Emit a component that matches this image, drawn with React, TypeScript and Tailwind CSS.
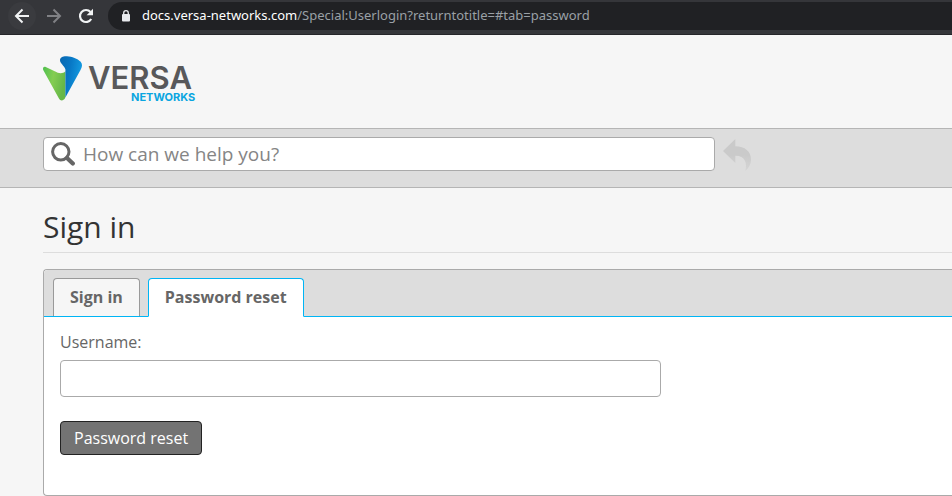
import { useState } from 'react'

function BrowserBar() {
  return (
    <div className="flex h-[35px] items-start border-b border-[#252529] bg-[#35363a] pt-[2px] font-['Noto_Sans',sans-serif]">
      <div className="flex h-7 w-[108px] shrink-0 items-center pl-2">
        <button type="button" aria-label="Back" className="flex size-7 items-center justify-center rounded-full bg-[#3a3b3f]">
          <svg width="16" height="16" viewBox="0 0 16 16" fill="none" stroke="#f1f3f4" strokeWidth="2">
            <path d="M15 8H2.5M8.5 1.5 2 8l6.5 6.5" />
          </svg>
        </button>
        <button type="button" aria-label="Forward" className="ml-1 flex size-7 items-center justify-center">
          <svg width="16" height="16" viewBox="0 0 16 16" fill="none" stroke="#808185" strokeWidth="2">
            <path d="M1 8h12.500M7.500 1.500 14 8l-6.500 6.500" />
          </svg>
        </button>
        <button type="button" aria-label="Reload" className="ml-1 flex size-7 items-center justify-center">
          <svg width="16" height="16" viewBox="0 0 16 16" fill="none">
            <path d="M13.200 11A6 6 0 1 1 12.500 4" stroke="#f1f3f4" strokeWidth="2.200" />
            <path d="M15 .8v6.400H8.600Z" fill="#f1f3f4" />
          </svg>
        </button>
      </div>
      <div className="flex h-7 min-w-0 flex-1 items-center rounded-l-full bg-[#202124] pl-[13px]">
        <svg width="10" height="12" viewBox="0 0 10 12" className="shrink-0">
          <path d="M2.700 5V3a2.300 2.300 0 0 1 4.600 0v2" fill="none" stroke="#e8eaed" strokeWidth="1.300" />
          <rect x="1" y="4" width="8" height="7.500" rx="1" fill="#e8eaed" />
        </svg>
        <span className="ml-[11px] truncate text-[13px] text-[#9aa0a6]">
          <span className="text-white">docs.versa-networks.com</span>/Special:Userlogin?returntotitle=#tab=password
        </span>
      </div>
    </div>
  )
}

function Logo() {
  return (
    <a href="/" aria-label="Versa Networks" className="inline-block">
      <svg width="156" height="50" viewBox="0 0 156 50">
        <defs>
          <linearGradient id="green" x1="0" y1="0" x2="1" y2="0.300">
            <stop offset="0" stopColor="#4fc04f" />
            <stop offset="0.500" stopColor="#84cd52" />
            <stop offset="1" stopColor="#66b748" />
          </linearGradient>
          <linearGradient id="blue" x1="0" y1="0" x2="1" y2="0.300">
            <stop offset="0" stopColor="#0a68b0" />
            <stop offset="0.500" stopColor="#0878c6" />
            <stop offset="1" stopColor="#149be0" />
          </linearGradient>
        </defs>
        <path
          d="M2.200 11.800C.2 11.400-.6 13.500.5 15.600L15.800 43.200C17.500 46.200 20.200 46 22 43.200L22.400 42V16.200C19.600 19 15.800 18.700 11.700 16.200Z"
          fill="url(#green)"
        />
        <path
          d="M22.400 16.200C23.700 12.300 17 9 17 5.200C17 1.900 20.200 1 24 1.200C29 1.500 34.500 3.500 37.700 6.800C39.800 9.300 39.200 12 37.500 15L22.400 42.600Z"
          fill="url(#blue)"
        />
        <text fontFamily="Inter, sans-serif">
          <tspan x="45" y="34" fontSize="31" fontWeight="600" fill="#58585a">
            VERSA
          </tspan>
          <tspan x="88" y="46" fontSize="11" fontWeight="700" fill="#09a5e0">
            NETWORKS
          </tspan>
        </text>
      </svg>
    </a>
  )
}

function SearchBar() {
  return (
    <div className="flex items-start border-y border-[#b5b5b5] bg-[#ddd] pt-2 pr-4 pb-4 pl-[43px]">
      <label className="flex h-[34px] w-full max-w-[672px] items-center rounded border border-[#aaa] bg-white px-[7px]">
        <svg width="24" height="24" viewBox="0 0 24 24" fill="none" stroke="#666" className="shrink-0">
          <circle cx="9.800" cy="9.800" r="8.200" strokeWidth="3" />
          <path d="m16 16 5.800 5.600" strokeWidth="4.200" strokeLinecap="round" />
        </svg>
        <input
          type="search"
          aria-label="Search"
          placeholder="How can we help you?"
          className="ml-2 w-full min-w-0 bg-transparent text-[19px] outline-none placeholder:text-[#858585]"
        />
      </label>
      <button type="button" aria-label="Back to previous page" className="ml-2 h-[34px] shrink-0 pt-[2px]">
        <svg width="28" height="32" viewBox="0 0 84 96">
          <defs>
            <linearGradient id="reply" x1="0" y1="0" x2="0" y2="1">
              <stop offset="0.500" stopColor="#cacaca" />
              <stop offset="1" stopColor="#d5d5d5" />
            </linearGradient>
          </defs>
          <path d="M0 36 37 0V22C66 22 84 38 84 62C84 76 77 87 67 96C73 72 67 50 37 50V72Z" fill="url(#reply)" />
        </svg>
      </button>
    </div>
  )
}

const tabs = [
  { id: 'signin', label: 'Sign in' },
  { id: 'password', label: 'Password reset' },
]

export default function App() {
  const [activeTab, setActiveTab] = useState('password')

  return (
    <div className="min-h-screen bg-[#f6f6f6] font-['Open_Sans',sans-serif] text-base text-[#666]">
      <BrowserBar />
      <header className="h-[93px] pt-5 pl-[43px]">
        <Logo />
      </header>
      <SearchBar />

      <main className="pl-[43px]">
        <h1 className="border-b border-[#ddd] pt-[18px] pb-1 text-[30px] leading-[42px] text-[#333]">Sign in</h1>

        <section className="mt-4 rounded-l border border-r-0 border-[#aaa] bg-white">
          <div role="tablist" className="flex gap-2 rounded-tl border-b border-[#00b5f5] bg-[#ddd] px-[9px] pt-2">
            {tabs.map((tab) => (
              <button
                key={tab.id}
                type="button"
                role="tab"
                aria-selected={activeTab === tab.id}
                onClick={() => setActiveTab(tab.id)}
                className={`rounded-t border px-4 font-bold leading-[37px] ${
                  activeTab === tab.id
                    ? '-mb-px border-[#00b5f5] border-b-white bg-white'
                    : 'border-b-0 border-[#999] bg-[#f6f6f6]'
                }`}
              >
                {tab.label}
              </button>
            ))}
          </div>

          <form className="px-4 pt-[13px] pb-10" onSubmit={(event) => event.preventDefault()}>
            <label htmlFor="username" className="block leading-6">
              Username:
            </label>
            <input
              id="username"
              type="text"
              className="mt-[6px] block h-[37px] w-full max-w-[601px] rounded border border-[#aaa] bg-white px-2"
            />
            <button
              type="submit"
              className="mt-6 block h-[34px] rounded border border-[#222] bg-[#737373] px-[13px] text-white"
            >
              Password reset
            </button>
          </form>
        </section>
      </main>
    </div>
  )
}
